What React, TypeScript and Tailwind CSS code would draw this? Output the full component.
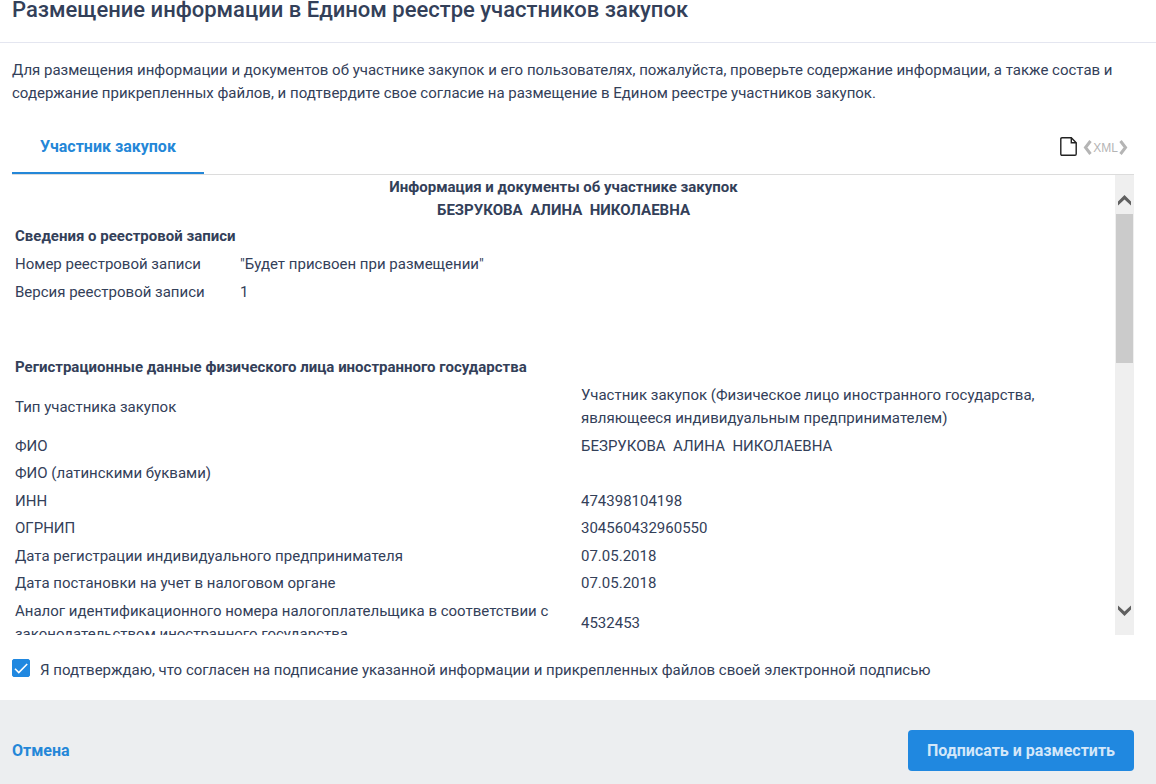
import { useState } from "react";

interface Field {
  label: string;
  value: string;
}

const RECORD_FIELDS: Field[] = [
  { label: "Номер реестровой записи", value: "\"Будет присвоен при размещении\"" },
  { label: "Версия реестровой записи", value: "1" },
];

const REGISTRATION_FIELDS: Field[] = [
  {
    label: "Тип участника закупок",
    value: "Участник закупок (Физическое лицо иностранного государства, являющееся индивидуальным предпринимателем)",
  },
  { label: "ФИО", value: "БЕЗРУКОВА  АЛИНА  НИКОЛАЕВНА" },
  { label: "ФИО (латинскими буквами)", value: "" },
  { label: "ИНН", value: "474398104198" },
  { label: "ОГРНИП", value: "304560432960550" },
  { label: "Дата регистрации индивидуального предпринимателя", value: "07.05.2018" },
  { label: "Дата постановки на учет в налоговом органе", value: "07.05.2018" },
  {
    label: "Аналог идентификационного номера налогоплательщика в соответствии с законодательством иностранного государства",
    value: "4532453",
  },
];

function FieldTable({ title, fields, labelWidth }: { title: string; fields: Field[]; labelWidth: string }) {
  return (
    <table className="w-full table-fixed text-left">
      <caption className="p-[3px] text-left font-bold">{title}</caption>
      <colgroup>
        <col className={labelWidth} />
        <col />
      </colgroup>
      <tbody>
        {fields.map((field) => (
          <tr key={field.label} className="group">
            <th scope="row" className="px-[3px] py-0.5 font-normal group-odd:pb-[3px]">
              {field.label}
            </th>
            <td className="py-0.5 pr-16 pl-[3px] whitespace-pre-wrap group-odd:pb-[3px]">{field.value}</td>
          </tr>
        ))}
      </tbody>
    </table>
  );
}

function ScrollBar() {
  return (
    <div className="flex w-[19px] shrink-0 flex-col bg-[#efefef] px-px">
      <button type="button" aria-label="Прокрутить вверх" className="flex h-[39px] items-center justify-center pt-3">
        <svg width="13" height="11" viewBox="0 0 13 11" fill="#606060">
          <path d="M0 6.5 6.5 0 13 6.5V10.5L6.5 4.5 0 10.5Z" />
        </svg>
      </button>
      <div className="h-[149px] bg-[#cbcbcb]" />
      <button type="button" aria-label="Прокрутить вниз" className="mt-auto flex h-[39px] items-center justify-center pb-2.5">
        <svg width="13" height="11" viewBox="0 0 13 11" fill="#606060">
          <path d="M0 4.5 6.5 11 13 4.5V.5L6.5 6.5 0 .5Z" />
        </svg>
      </button>
    </div>
  );
}

export default function App() {
  const [confirmed, setConfirmed] = useState(true);

  return (
    <div className="flex min-h-screen flex-col overflow-hidden bg-white font-['Roboto',sans-serif] text-[15px] leading-[23px] text-[#334059]">
      {/* Header */}
      <header className="border-b border-[#e4e6f0] px-3 pb-[22px]">
        <h1 className="text-[22px] leading-5 font-medium">Размещение информации в Едином реестре участников закупок</h1>
      </header>

      <main className="pt-4 pr-[22px] pl-3">
        <p>
          Для размещения информации и документов об участнике закупок и его пользователях, пожалуйста, проверьте содержание
          информации, а также состав и содержание прикрепленных файлов, и подтвердите свое согласие на размещение в Едином
          реестре участников закупок.
        </p>

        {/* Tabs */}
        <div className="mt-4 flex items-end justify-between border-b border-[#dcdcdc]" role="tablist">
          <button
            type="button"
            role="tab"
            aria-selected="true"
            className="h-[53px] border-b-2 border-[#2487d8] px-7 text-base font-bold text-[#2487d8]"
          >
            Участник закупок
          </button>
          <div className="flex items-center gap-1.5 pr-1.5 pb-4">
            <button type="button" aria-label="Печатная форма" className="pb-0.5">
              <svg width="17" height="19" viewBox="0 0 17 19" fill="none" stroke="#222" strokeWidth="1.4">
                <path d="M2 .8H11.3L16.2 5.7V17Q16.2 18.2 15 18.2H2Q.8 18.2 .8 17V2Q.8 .8 2 .8Z" />
                <path d="M11.3 .8V5.7H16.2" />
              </svg>
            </button>
            <button type="button" className="flex items-center gap-px font-['Liberation_Sans',sans-serif] text-xs leading-4 text-[#b5b5b5]">
              <svg width="9" height="15" viewBox="0 0 9 15" fill="none" stroke="currentColor" strokeWidth="3">
                <path d="M7.5 1 2.5 7.5 7.5 14" />
              </svg>
              XML
              <svg width="9" height="15" viewBox="0 0 9 15" fill="none" stroke="currentColor" strokeWidth="3">
                <path d="M1.5 1 6.5 7.5 1.5 14" />
              </svg>
            </button>
          </div>
        </div>

        {/* Document */}
        <div className="flex h-[460px]">
          <div className="min-w-0 flex-1 overflow-hidden pt-px">
            <h2 className="text-center font-bold whitespace-pre">
              Информация и документы об участнике закупок
              <br />
              {"БЕЗРУКОВА  АЛИНА  НИКОЛАЕВНА"}
            </h2>
            <FieldTable title="Сведения о реестровой записи" fields={RECORD_FIELDS} labelWidth="w-[225px]" />
            <div className="h-[47px]" />
            <FieldTable
              title="Регистрационные данные физического лица иностранного государства"
              fields={REGISTRATION_FIELDS}
              labelWidth="w-[566px]"
            />
          </div>
          <ScrollBar />
        </div>

        {/* Agreement */}
        <label className="mt-6 flex items-start gap-2.5">
          <span className="relative flex size-[18px]">
            <input
              type="checkbox"
              checked={confirmed}
              onChange={(e) => setConfirmed(e.target.checked)}
              className="peer size-[18px] appearance-none rounded-xs border border-[#2088e0] checked:bg-[#2088e0]"
            />
            <svg
              className="pointer-events-none absolute inset-0 hidden peer-checked:block"
              width="18"
              height="18"
              viewBox="0 0 18 18"
              fill="none"
              stroke="#fff"
              strokeWidth="1.6"
            >
              <path d="M3 9.8 6.8 13.5 15.2 5" />
            </svg>
          </span>
          Я подтверждаю, что согласен на подписание указанной информации и прикрепленных файлов своей электронной подписью
        </label>
      </main>

      {/* Footer */}
      <footer className="mt-[18px] flex flex-1 items-start justify-between bg-[#eceef0] pt-[30px] pr-[22px] pl-3 text-base font-bold">
        <button type="button" className="h-[41px] text-[#2487d8]">
          Отмена
        </button>
        <button type="button" disabled={!confirmed} className="h-[41px] rounded bg-[#2088e0] px-[19px] text-[#d3e7f9]">
          Подписать и разместить
        </button>
      </footer>
    </div>
  );
}
